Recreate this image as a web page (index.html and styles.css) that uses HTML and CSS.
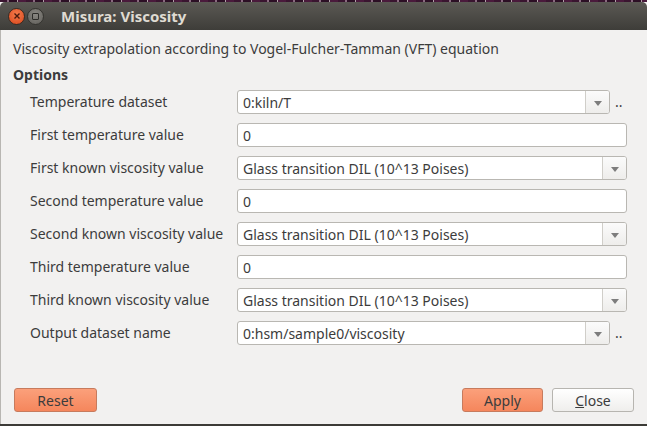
FILE: index.html
```html
<!DOCTYPE html>
<html>
<head>
<meta charset="utf-8">
<link rel="stylesheet" href="styles.css">
</head>
<body>
<div class="window">
  <div class="desk"></div>
  <div class="titlebar">
    <span class="tb-btn tb-close"><svg width="8" height="8" viewBox="0 0 8 8"><path d="M1.5 1.5L6.5 6.5M6.5 1.5L1.5 6.5" stroke="#4a1a0c" stroke-width="1.4"/></svg></span>
    <span class="tb-btn tb-max"><span class="sq"></span></span>
    <span class="title">Misura: Viscosity</span>
  </div>
  <div class="content">
    <p class="desc">Viscosity extrapolation according to Vogel-Fulcher-Tamman (VFT) equation</p>
    <p class="group">Options</p>
    <div class="form">
      <div class="label">Temperature dataset</div>
      <div class="field"><div class="combo"><span class="val">0:kiln/T</span><span class="arrow"></span></div><span class="dots">..</span></div>

      <div class="label">First temperature value</div>
      <div class="field"><div class="edit">0</div></div>

      <div class="label">First known viscosity value</div>
      <div class="field"><div class="combo"><span class="val">Glass transition DIL (10^13 Poises)</span><span class="arrow"></span></div></div>

      <div class="label">Second temperature value</div>
      <div class="field"><div class="edit">0</div></div>

      <div class="label">Second known viscosity value</div>
      <div class="field"><div class="combo"><span class="val">Glass transition DIL (10^13 Poises)</span><span class="arrow"></span></div></div>

      <div class="label">Third temperature value</div>
      <div class="field"><div class="edit">0</div></div>

      <div class="label">Third known viscosity value</div>
      <div class="field"><div class="combo"><span class="val">Glass transition DIL (10^13 Poises)</span><span class="arrow"></span></div></div>

      <div class="label">Output dataset name</div>
      <div class="field"><div class="combo"><span class="val">0:hsm/sample0/viscosity</span><span class="arrow"></span></div><span class="dots">..</span></div>
    </div>
    <div class="spacer"></div>
    <div class="buttons">
      <button class="btn accent reset">Reset</button>
      <div class="grow"></div>
      <button class="btn accent apply">Apply</button>
      <button class="btn plain close"><u>C</u>lose</button>
    </div>
  </div>
  <div class="bottom"></div>
</div>
</body>
</html>
```
FILE: styles.css
```css
* { box-sizing: border-box; }
html, body { margin: 0; padding: 0; }
body {
  width: 647px; height: 426px; overflow: hidden;
  font-family: "Noto Sans", "DejaVu Sans", sans-serif;
  font-size: 14px; color: #3c3c3c;
  background: #f2f1f0;
}
.window { width: 647px; height: 426px; display: flex; flex-direction: column; position: relative; }
.desk {
  height: 2px; flex: none;
  background: repeating-linear-gradient(90deg, #3a1530 0 7px, #8a6a80 7px 9px, #2c0f25 9px 17px, #b0a0a8 17px 18px, #4a1a3c 18px 26px);
}
.titlebar {
  height: 28px; flex: none;
  background: linear-gradient(#5b5954, #3e3d39);
  display: flex; align-items: center;
  padding-left: 8px;
  border-top-left-radius: 5px; border-top-right-radius: 5px;
}
.tb-btn {
  width: 17px; height: 17px; border-radius: 50%;
  display: flex; align-items: center; justify-content: center;
  margin-right: 2px;
}
.tb-close { background: radial-gradient(circle at 50% 35%, #f47a4a, #d9471c); border: 1px solid #3a2a22; }
.tb-max { background: radial-gradient(circle at 50% 35%, #8a8883, #5f5d58); border: 1px solid #34332f; }
.tb-max .sq { width: 7px; height: 7px; border: 1px solid #2e2d2a; border-radius: 1px; }
.title { margin-left: 15px; color: #dfdbd2; font-weight: bold; font-size: 15px; }
.content {
  flex: 1; display: flex; flex-direction: column;
  padding: 10px 12px 12px 13px;
  border-left: 1px solid #b8b6b2;
}
.desc { margin: 0 0 0 -1px; line-height: 18px; height: 18px; }
.group { margin: 8px 0 0 -1px; font-weight: bold; line-height: 18px; }
.form {
  display: grid; grid-template-columns: 207px 1fr;
  row-gap: 9px; align-items: center;
  margin-top: 6px; padding-left: 16px; padding-right: 8px;
}
.label { line-height: 24px; white-space: nowrap; }
.field { display: flex; align-items: center; }
.combo, .edit {
  flex: 1; height: 24px;
  background: #fff;
  border: 1px solid #b9b7b2; border-radius: 3px;
  display: flex; align-items: center;
}
.edit { padding-left: 5px; }
.combo .val { flex: 1; padding-left: 5px; }
.arrow {
  width: 24px; height: 22px; border-left: 1px solid #d0cec9;
  background: linear-gradient(#fbfbfb, #eeedeb);
  border-radius: 0 2px 2px 0;
  position: relative;
}
.arrow::after {
  content: ""; position: absolute; left: 8px; top: 10px;
  border-left: 4px solid transparent; border-right: 4px solid transparent;
  border-top: 5px solid #7d7d7d;
}
.dots { width: 17px; padding-left: 5px; color: #3c3c3c; line-height: 24px; }
.spacer { flex: 1; }
.buttons { display: flex; align-items: center; gap: 9px; }
.grow { flex: 1; }
.btn {
  height: 24px; font-family: inherit; font-size: 14px; color: #3c3c3c;
  border-radius: 3px; padding: 0; cursor: default;
}
.accent { background: linear-gradient(#fba07b, #f5865c); border: 1px solid #c77b5d; }
.plain { background: linear-gradient(#ffffff, #efeeec); border: 1px solid #b7b5b0; }
.reset { width: 83px; }
.apply { width: 81px; }
.close { width: 82px; margin-right: 1px; }
.bottom { height: 2px; background: #3c3b37; flex: none; }
```
